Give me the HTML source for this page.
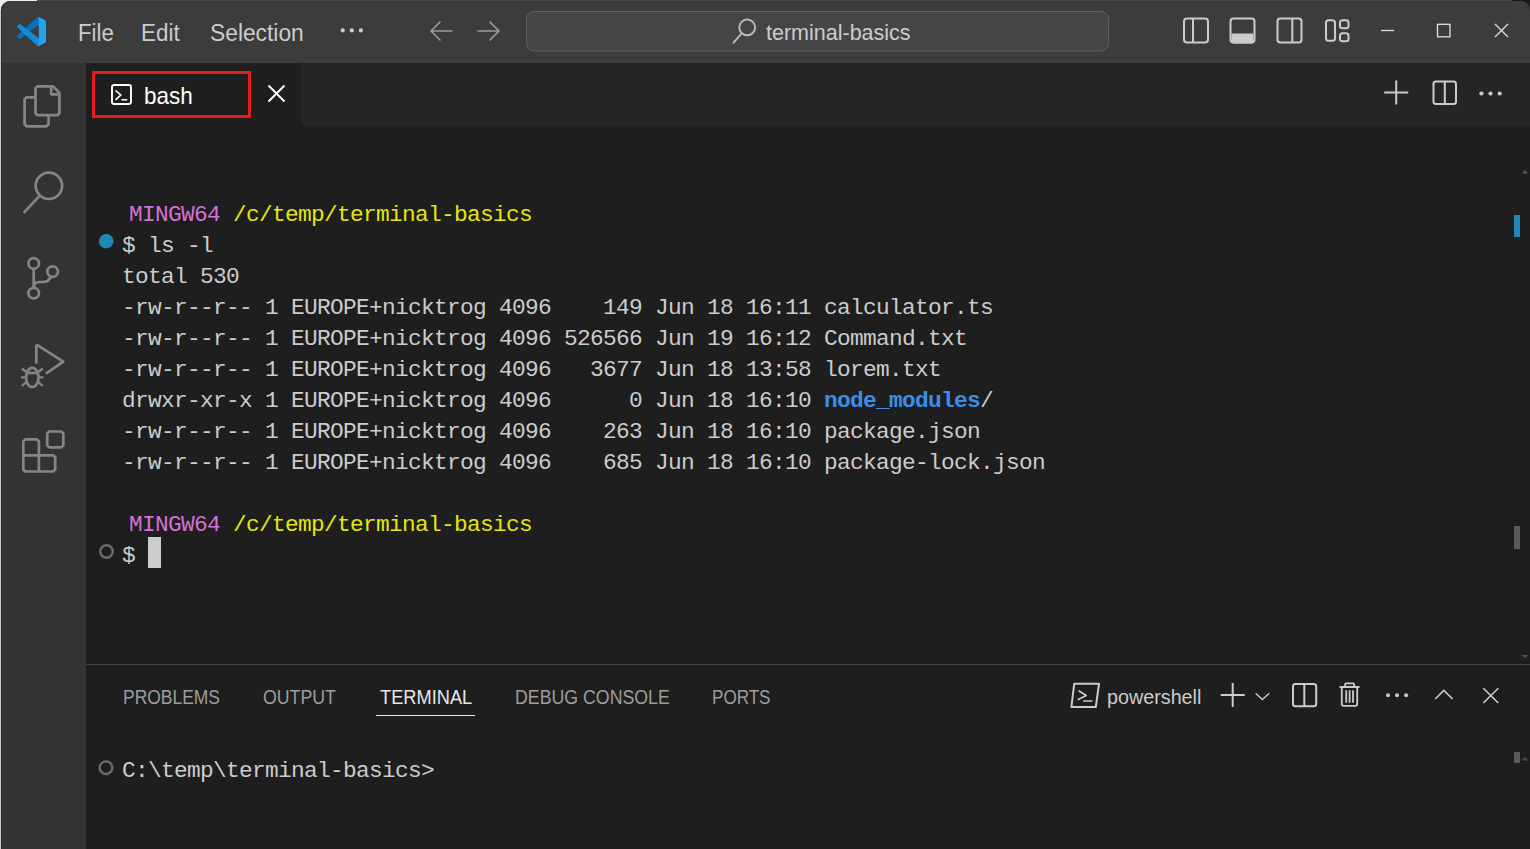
<!DOCTYPE html>
<html><head><meta charset="utf-8">
<style>
*{margin:0;padding:0;box-sizing:border-box}
html,body{width:1530px;height:849px;overflow:hidden;background:#3c3c3c}
body{position:relative;font-family:"Liberation Sans",sans-serif}
.abs{position:absolute}
svg{position:absolute;overflow:visible}
#desk{position:absolute;left:0;top:0;width:1530px;height:849px;background:#c8c8c8}
#win{position:absolute;left:1px;top:1px;width:1529px;height:848px;background:#1e1e1e;border-top-left-radius:9px;border-top-right-radius:9px;overflow:hidden}
#title{position:absolute;left:0;top:0;width:1529px;height:62px;background:#3c3c3c}
#act{position:absolute;left:0;top:62px;width:85px;height:786px;background:#333333}
#tabs{position:absolute;left:85px;top:62px;width:1444px;height:63px;background:#252526}
#tab{position:absolute;left:0;top:0;width:215px;height:63px;background:#1e1e1e}
.menu{position:absolute;top:18.9px;font-size:23.5px;transform-origin:0 0;color:#cccccc;line-height:28px;white-space:nowrap}
.term{position:absolute;font-family:"Liberation Mono",monospace;font-size:22.8px;letter-spacing:-0.682px;line-height:31px;color:#cccccc;white-space:pre}
.mg{color:#d670d6}.yl{color:#e5e510}.bl{color:#3b8eea;font-weight:bold}
.ptab{position:absolute;top:685px;font-size:19.5px;line-height:24px;color:#9d9d9d;white-space:nowrap;transform-origin:0 0;transform:scaleX(0.9)}
</style></head><body>
<div id="desk"></div><div class="abs" style="left:0;top:0;width:1530px;height:1px;background:#4a4a4a"></div><div class="abs" style="left:0;top:0;width:37px;height:1px;background:#efefef"></div><div class="abs" style="left:0;top:0;width:10px;height:10px;background:#eeeeee"></div><div class="abs" style="left:1512px;top:0;width:18px;height:14px;background:#1a1a1a"></div>
<div id="win">
  <div id="title"></div>
  <div id="act"></div><div class="abs" style="left:0;top:0;width:1px;height:848px;background:#2c2c2c;opacity:.55"></div>
  <div id="tabs"><div id="tab"></div></div>
  <div class="abs" style="left:85px;top:663px;width:1444px;height:1px;background:#414141"></div>
</div>

<!-- VS Code logo -->
<svg style="left:17px;top:17px" width="29" height="29" viewBox="0 0 100 100">
<path fill="#0b70be" d="M96.46 10.8L75.86.9C73.48-.25 70.63.23 68.76 2.1L1.33 63.6C-.48 65.25-.48 68.1 1.33 69.75L6.84 74.76C8.33 76.11 10.56 76.21 12.15 75L93.41 13.36C96.14 11.29 100 13.23 100 16.65V16.4C100 14 98.62 11.84 96.46 10.8Z"/>
<path fill="#168ad9" d="M96.46 89.2L75.86 99.1C73.48 100.25 70.63 99.77 68.76 97.9L1.33 36.4C-.48 34.75-.48 31.9 1.33 30.25L6.84 25.24C8.33 23.89 10.56 23.79 12.15 25L93.41 86.64C96.14 88.71 100 86.77 100 83.35V83.6C100 86 98.62 88.16 96.46 89.2Z"/>
<path fill="#22a3f1" d="M75.86 99.1C73.48 100.25 70.63 99.77 68.76 97.9C71.07 100.2 75 98.56 75 95.3V4.7C75 1.44 71.07-.2 68.76 2.1C70.63.23 73.48-.25 75.86.9L96.46 10.8C98.62 11.84 100 14.03 100 16.43V83.57C100 85.97 98.62 88.16 96.46 89.2Z"/>
</svg>

<!-- menu -->
<div class="menu" style="left:77.5px;transform:scaleX(0.945)">File</div>
<div class="menu" style="left:141px;transform:scaleX(0.955)">Edit</div>
<div class="menu" style="left:209.5px;transform:scaleX(0.97)">Selection</div>
<svg style="left:0;top:0" width="1530" height="62">
  <g fill="#cccccc"><circle cx="342.7" cy="30.4" r="2.1"/><circle cx="351.8" cy="30.4" r="2.1"/><circle cx="360.9" cy="30.4" r="2.1"/></g>
  <g stroke="#9b9b9b" stroke-width="1.6" fill="none" stroke-linecap="round">
    <path d="M452 31H431M440 22L431 31L440 40"/>
    <path d="M478 31H499M490 22L499 31L490 40"/>
  </g>
  <rect x="526.5" y="11.5" width="582" height="39.5" rx="7.5" fill="#454545" stroke="#5e5e5e" stroke-width="1"/>
  <g stroke="#bcbcbc" stroke-width="1.9" fill="none">
    <circle cx="747.2" cy="27.4" r="7.9"/><path d="M741.6 33.4L733.4 42.8" stroke-linecap="round"/>
  </g>
  <g stroke="#cccccc" stroke-width="2" fill="none">
    <rect x="1184" y="18.5" width="24" height="24" rx="3"/><path d="M1193 18.5V42.5"/>
    <rect x="1230.5" y="18.5" width="24" height="24" rx="3"/>
    <rect x="1277.5" y="18.5" width="24" height="24" rx="3"/><path d="M1292.3 18.5V42.5"/>
    <rect x="1326" y="20.3" width="9" height="20.5" rx="2.5"/>
    <rect x="1340" y="20.3" width="8.5" height="8" rx="2.5"/>
    <rect x="1340" y="33.2" width="8.5" height="8" rx="2.5"/>
  </g>
  <path d="M1231.5 33.5H1253.5V41.5Q1253.5 43.5 1251.5 43.5H1233.5Q1231.5 43.5 1231.5 41.5Z" fill="#cccccc"/>
  <g stroke="#e0e0e0" stroke-width="1.3" fill="none">
    <path d="M1381 30.5H1394"/>
    <rect x="1437.5" y="24.3" width="12.5" height="12.5"/>
    <path d="M1495 24L1508 37M1508 24L1495 37"/>
  </g>
</svg>

<div class="abs" style="left:766px;top:18.8px;font-size:21.5px;line-height:28px;color:#cccccc;white-space:nowrap">terminal-basics</div>
<!-- activity bar icons -->
<svg style="left:0;top:0" width="86" height="500">
 <g stroke="#858585" stroke-width="2.7" fill="none" stroke-linejoin="round">
  <path d="M35.5 97.3H26.6L24.6 99.3V124.3L26.6 126.3H46.6L48.6 124.3V115.2"/>
  <path d="M37.5 86.3H52.9L59.4 92.7V113.2L57.4 115.2H37.5L35.5 113.2V88.3L37.5 86.3Z"/>
  <path d="M51.2 86.3V94.3H59.4"/>
  <circle cx="48.9" cy="185.8" r="13.2"/>
  <path d="M38.8 196.6L24.4 212.2" stroke-linecap="round"/>
  <circle cx="33.7" cy="263.4" r="5.3"/>
  <circle cx="52.6" cy="271.6" r="5.3"/>
  <circle cx="33.7" cy="293.1" r="5.3"/>
  <path d="M33.7 268.7V287.8"/>
  <path d="M50.8 276.6Q48.5 282 43.5 282H39Q34.5 282 33.7 287"/>
  <path d="M36.3 363.4V346.5Q36.3 344.5 38.2 345.6L63.3 361.7L45.9 373.7"/>
  <ellipse cx="32.3" cy="377.4" rx="6.2" ry="9.6"/>
  <path d="M26.5 372.9H38.2" />
  <path d="M21.8 368.5L26.5 372M42.8 368.5L38.1 372M21 377.4H26M38.6 377.4H43.6M21.8 386L26 382.3M42.8 386L38.6 382.3" stroke-width="2.3"/>
  <path d="M23.3 441.4L25.3 439.4H36.9L38.9 441.4V455.3H53.2L55.2 457.3V469.5L53.2 471.5H25.3L23.3 469.5Z"/>
  <path d="M23.3 455.3H38.9V471.5"/>
  <path d="M49.2 431.5H61.3L63.3 433.5V445.4L61.3 447.4H49.2L47.2 445.4V433.5Z"/>
 </g>
</svg>

<!-- bash tab -->
<div class="abs" style="left:92px;top:71px;width:159px;height:47px;border:3px solid #e51c1c"></div>
<svg style="left:0;top:60px" width="320" height="60">
  <g stroke="#ffffff" stroke-width="1.9" fill="none">
    <rect x="112" y="25" width="19" height="19" rx="2.2"/>
    <path d="M115.5 30.5L120.8 35L115.5 39.8M121.5 39.8H127.3" stroke-width="1.6"/>
    <path d="M268.5 25.5L284.5 41.5M284.5 25.5L268.5 41.5" stroke-width="2"/>
  </g>
</svg>
<div class="abs" style="left:144px;top:81.9px;font-size:23.2px;line-height:28px;color:#ffffff;transform-origin:0 0;transform:scaleX(0.97)">bash</div>

<!-- editor toolbar icons -->
<svg style="left:0;top:60px" width="1530" height="60">
  <g stroke="#cccccc" stroke-width="2" fill="none">
    <path d="M1396.2 20.5V44.5M1384.2 32.5H1408.2"/>
    <rect x="1433.5" y="21.5" width="22.5" height="22.5" rx="2.5"/><path d="M1444.8 21.5V44"/>
  </g>
  <g fill="#cccccc"><circle cx="1481.4" cy="33.5" r="2.1"/><circle cx="1490.5" cy="33.5" r="2.1"/><circle cx="1499.7" cy="33.5" r="2.1"/></g>
</svg>

<!-- terminal text -->
<div class="term" style="left:116px;top:200px"> <span class="mg">MINGW64</span> <span class="yl">/c/temp/terminal-basics</span></div>
<div class="term" style="left:122px;top:231px">$ ls -l
total 530
-rw-r--r-- 1 EUROPE+nicktrog 4096    149 Jun 18 16:11 calculator.ts
-rw-r--r-- 1 EUROPE+nicktrog 4096 526566 Jun 19 16:12 Command.txt
-rw-r--r-- 1 EUROPE+nicktrog 4096   3677 Jun 18 13:58 lorem.txt
drwxr-xr-x 1 EUROPE+nicktrog 4096      0 Jun 18 16:10 <span class="bl">node_modules</span>/
-rw-r--r-- 1 EUROPE+nicktrog 4096    263 Jun 18 16:10 package.json
-rw-r--r-- 1 EUROPE+nicktrog 4096    685 Jun 18 16:10 package-lock.json
</div>
<div class="term" style="left:116px;top:510px"> <span class="mg">MINGW64</span> <span class="yl">/c/temp/terminal-basics</span></div>
<div class="term" style="left:122px;top:541px">$ </div>
<div class="abs" style="left:148px;top:537px;width:13px;height:31px;background:#cccccc"></div>
<svg style="left:0;top:0" width="200" height="849">
  <circle cx="106.2" cy="241.2" r="7.3" fill="#2188b6"/>
  <circle cx="106.5" cy="551.5" r="6.3" fill="none" stroke="#6b6b6b" stroke-width="2.4"/>
  <circle cx="106" cy="767.7" r="6.3" fill="none" stroke="#6b6b6b" stroke-width="2.4"/>
</svg>
<div class="term" style="left:122px;top:756px">C:\temp\terminal-basics&gt;</div>

<!-- panel tabs -->
<div class="ptab" style="left:123px;transform:scaleX(0.895)">PROBLEMS</div>
<div class="ptab" style="left:263px;transform:scaleX(0.91)">OUTPUT</div>
<div class="ptab" style="left:380px;color:#e7e7e7;transform:scaleX(0.935)">TERMINAL</div>
<div class="ptab" style="left:515px;transform:scaleX(0.91)">DEBUG CONSOLE</div>
<div class="ptab" style="left:712px;transform:scaleX(0.875)">PORTS</div>
<div class="abs" style="left:376px;top:715px;width:99px;height:1px;background:#e7e7e7"></div>

<!-- panel toolbar -->
<svg style="left:1000px;top:650px" width="530" height="80">
  <g stroke="#cccccc" stroke-width="2" fill="none" stroke-linejoin="round">
    <path d="M74.2 33.8L99 33.8L95.8 57L71.4 57Z"/>
    <path d="M78.6 40.8L86.2 45.4L77.7 49.8M83.2 51H92.5" stroke-width="1.7"/>
    <path d="M232.7 33V57M220.7 45H244.7"/>
    <path d="M1256 693" />
    <path d="M255.6 43.3L262.4 49.6L269.2 43.3" stroke-width="1.4"/>
    <rect x="293" y="34" width="23.2" height="22.3" rx="2.5"/><path d="M304.3 34V56.3"/>
    <path d="M339.5 37H359.6M345.1 37V34.4Q345.1 33.3 346.2 33.3H353.1Q354.2 33.3 354.2 34.4V37M341.8 37V54Q341.8 55.8 343.6 55.8H355.4Q357.2 55.8 357.2 54V37M346.2 40.3V52.8M349.6 40.3V52.8M353 40.3V52.8" stroke-width="1.8"/>
    <path d="M435.2 49L443.8 40.4L452.6 49" stroke-width="1.5"/>
    <path d="M483.3 38.3L498.3 53M498.3 38.3L483.3 53" stroke-width="1.6"/>
  </g>
  <g fill="#cccccc"><circle cx="388" cy="45.3" r="2"/><circle cx="397" cy="45.3" r="2"/><circle cx="406.1" cy="45.3" r="2"/></g>
</svg>
<div class="abs" style="left:1107px;top:684px;font-size:21px;line-height:26px;color:#cccccc;transform-origin:0 0;transform:scaleX(0.94)">powershell</div>

<!-- scrollbars -->
<div class="abs" style="left:1514px;top:215px;width:6px;height:22px;background:#2188b6"></div>
<div class="abs" style="left:1514px;top:526px;width:6px;height:23px;background:#5a5a5a"></div>
<div class="abs" style="left:1514px;top:752px;width:6px;height:11px;background:#5a5a5a"></div>
<svg style="left:1510px;top:160px" width="20" height="620">
  <g fill="#595959">
  <path d="M1522 13.5L1525 10L1528 13.5Z" transform="translate(-1510 0)"/>
  <path d="M1521.5 495L1525 498.5L1528.5 495Z" transform="translate(-1510 0)" fill="#4d4d4d"/>
  <path d="M1521.5 600.5L1525 597L1528.5 600.5Z" transform="translate(-1510 0)" fill="#4d4d4d"/>
  </g>
</svg>

</body></html>
